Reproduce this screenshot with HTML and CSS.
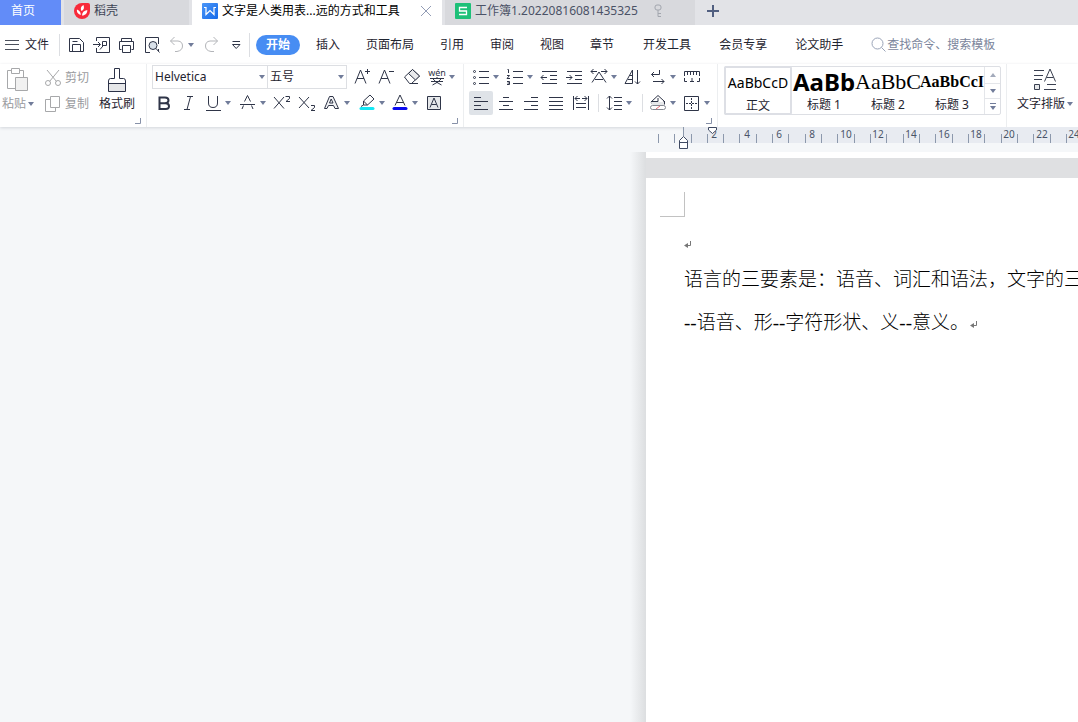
FILE: index.html
```html
<!DOCTYPE html>
<html lang="zh-CN">
<head>
<meta charset="utf-8">
<title>文字是人类用表…远的方式和工具</title>
<link rel="stylesheet" href="styles.css">
</head>
<body>
<svg class="defs" aria-hidden="true">
  <symbol id="caret" viewBox="0 0 6 4"><path d="M0 0H6L3 4Z" fill="#717c9a"/></symbol>
  <symbol id="corner" viewBox="0 0 6 6"><path d="M5.5 0V5.5H0" fill="none" stroke="#8791a8"/></symbol>
  <symbol id="mark" viewBox="0 0 8 8"><path d="M6.5 0V4.500H1" fill="none" stroke="#777"/><path d="M0 4.500L4 2V7Z" fill="#777"/></symbol>
</svg>

<nav class="tabs" aria-label="文档标签">
  <button class="tab home">首页</button>
  <button class="tab docer">
    <svg width="16" height="16" viewBox="0 0 16 16"><path d="M8 0H14Q16 0 16 2V8A8 8 0 0 1 8 16A8 8 0 0 1 0 8A8 8 0 0 1 8 0Z" fill="#f82a3a"/><path d="M7.500 8C6 5 7.500 3 9.500 2C10.500 5 10 7 7.500 8ZM6.800 12C3.500 11 2.500 8.500 3 6.500C5.800 7.500 6.800 9.500 6.800 12ZM8 12.500C8 9.500 10 7.500 13.300 7C13.500 10 11.500 12.500 8 12.500Z" fill="#fff"/></svg>
    <span>稻壳</span>
  </button>
  <div class="tab current">
    <svg width="16" height="16" viewBox="0 0 16 16"><defs><linearGradient id="wg" x2="1" y2="1"><stop stop-color="#4b96f8"/><stop offset="1" stop-color="#176be9"/></linearGradient></defs><rect width="16" height="16" rx="1" fill="url(#wg)"/><path d="M2 4.500H4V11.500L8 7.500L12 11.500V4.500H14" fill="none" stroke="#fff" stroke-width="1.200"/></svg>
    <span>文字是人类用表...远的方式和工具</span>
    <button class="close" aria-label="关闭"><svg width="12" height="12" viewBox="0 0 12 12"><path d="M1 1L11 11M11 1L1 11" stroke="#929cb5" fill="none"/></svg></button>
  </div>
  <button class="tab sheet">
    <svg width="16" height="16" viewBox="0 0 16 16"><rect width="16" height="16" rx="1" fill="#1dc078"/><path d="M12 4.500H4.500V8H11.500V11.500H4" fill="none" stroke="#fff" stroke-width="1.300"/></svg>
    <span>工作簿1.20220816081435325</span>
    <svg class="key" width="8" height="14" viewBox="0 0 8 14"><rect x="1" y="1" width="6" height="5" rx="2" fill="none" stroke="#a2a6ae"/><path d="M4 6V12.500H7M4 9.500H7" fill="none" stroke="#a2a6ae"/></svg>
  </button>
  <button class="add" aria-label="新建"><svg width="12" height="12" viewBox="0 0 12 12"><path d="M6 0V12M0 6H12" stroke="#515f80" stroke-width="2"/></svg></button>
</nav>

<header class="menu">
  <button class="file"><svg width="14" height="12" viewBox="0 0 14 12"><path d="M0 1.500H14M0 5.500H14M0 10.500H14" stroke="#4b505c"/></svg><span>文件</span></button>
  <div class="quick">
    <button aria-label="保存"><svg class="ic" viewBox="0 0 20 20"><path d="M3.500 3.500H13.500L17.500 7.500V16.500H3.500ZM6.500 16.500V9.500H14.500V16.500M6.500 6.500H11.500"/></svg></button>
    <button aria-label="输出为PDF"><svg class="ic" viewBox="0 0 20 20"><path d="M5.500 6V2.500H18.500V17.500H5.500V13M2 9.500H9M7 7L9.500 9.500L7 12M11.500 12V6.500H15.500V10.500H11.500M11.500 11.500L9 14.500"/></svg></button>
    <button aria-label="打印"><svg class="ic" viewBox="0 0 20 20"><path d="M5.500 6.500V3.500H15.500V6.500M5.500 14.500H3.500V6.500H17.500V14.500H15.500M6.500 10.500H14.500V17.500H6.500Z"/></svg></button>
    <button aria-label="打印预览"><svg class="ic" viewBox="0 0 20 20"><path d="M9 17.500H4.500V2.500H17.500V9M17.500 14V16"/><circle cx="12" cy="10.500" r="4" fill="#d9e1ea"/><path d="M15 13.500L18.500 17.500"/></svg></button>
    <button class="undo" aria-label="撤销"><svg class="ic off" viewBox="0 0 20 20"><path d="M8.500 2L4.500 6L8.500 10M4.500 6H12Q16.500 6.500 16.500 11Q16.500 15.500 11 16.500H9"/></svg><svg class="caret"><use href="#caret"/></svg></button>
    <button aria-label="恢复"><svg class="ic off" viewBox="0 0 20 20"><path d="M13.500 2L17.500 6L13.500 10M17.500 6H10Q5.500 6.500 5.500 11Q5.500 15.500 11 16.500H14"/></svg></button>
    <button aria-label="自定义"><svg class="ic" viewBox="0 0 20 20"><path d="M7.500 6.500H15M7.500 9.500H15L11.200 13.500Z"/></svg></button>
  </div>
  <div class="pages">
    <button class="on">开始</button>
    <button>插入</button><button>页面布局</button><button>引用</button><button>审阅</button><button>视图</button><button>章节</button>
  </div>
  <div class="extras"><button>开发工具</button><button>会员专享</button><button>论文助手</button>
    <label class="find"><svg width="16" height="16" viewBox="0 0 16 16"><circle cx="6.500" cy="6.500" r="5.500"/><path d="M10.500 10.500L14.500 14.500"/></svg><input type="text" placeholder="查找命令、搜索模板" aria-label="查找命令、搜索模板"></label>
  </div>
</header>

<section class="ribbon" aria-label="开始">
  <div class="group clip">
    <button class="tall faded"><svg width="24" height="26" viewBox="0 0 24 26"><path d="M5 3.500H1.500V21.500H9M14 3.500H17.500V10M5.500 1.500H13.500V6.500H5.500Z" fill="none" stroke="#a7a8aa"/><path d="M9.500 10.500H21.500V23.500H9.500Z" fill="#f1f1f1" stroke="#a7a8aa"/></svg><span>粘贴<svg class="caret"><use href="#caret"/></svg></span></button>
    <div class="pair faded">
      <button><svg width="16" height="18" viewBox="0 0 16 18"><path d="M2 1L11.500 12.500M14 1L4.500 12.500" fill="none" stroke="#a7a8aa"/><circle cx="3" cy="14" r="2.500" fill="none" stroke="#a7a8aa"/><circle cx="13" cy="14" r="2.500" fill="none" stroke="#a7a8aa"/></svg>剪切</button>
      <button><svg width="16" height="18" viewBox="0 0 16 18"><path d="M5.500 1.500H14.500V12.500H5.500ZM5.500 4.500H.5V16.500H10.500V12.500" fill="none" stroke="#a7a8aa"/></svg>复制</button>
    </div>
    <button class="tall brush"><svg width="20" height="26" viewBox="0 0 20 26"><path d="M1.500 16.500H18.500V24.500H1.500Z" fill="#e5e6e8"/><path d="M7.500 11.500V1.500H12.500V11.500H16.500Q18.500 11.500 18.500 14V24.500H1.500V14Q1.500 11.500 3.500 11.500H7.500M1.500 16.500H18.500" fill="none" stroke="#2b3147"/></svg><span>格式刷</span></button>
    <svg class="corner"><use href="#corner"/></svg>
  </div>

  <div class="group font">
    <div class="fontpick">
      <div class="combo"><select class="face" aria-label="字体"><option>Helvetica</option></select><svg class="caret"><use href="#caret"/></svg></div>
      <div class="combo size"><select aria-label="字号"><option>五号</option></select><svg class="caret"><use href="#caret"/></svg></div>
      <div class="growers">
        <button aria-label="增大字号"><svg class="ic" viewBox="0 0 20 20"><path d="M3 16.500L8.500 3L14 16.500M5 11.500H12M13 4.500H18M15.500 2V7"/></svg></button>
        <button aria-label="减小字号"><svg class="ic" viewBox="0 0 20 20"><path d="M3 16.500L8.500 3L14 16.500M5 11.500H12M13 4.500H18"/></svg></button>
        <button aria-label="清除格式"><svg class="ic" viewBox="0 0 20 20"><path d="M2.500 10L10.500 2.500L17.500 9L9.500 16.500H7.500Z"/><path d="M6.500 6.500L10.500 2.500L17.500 9L13.500 13Z" fill="#e8e9ec"/><path d="M8 16.500H16"/></svg></button>
        <button aria-label="拼音指南"><svg class="ic" viewBox="0 0 20 20"><text x="10" y="9" class="pinyin">wén</text><path d="M3 11.500H17M10 10V11.500M5.500 11.500Q8 15 14.500 18M14.500 11.500Q12 15 5.500 18M4 14.500H16"/></svg><svg class="caret"><use href="#caret"/></svg></button>
      </div>
    </div>
    <div class="cells fontrow">
      <button aria-label="加粗"><svg class="ic" viewBox="0 0 20 20"><path d="M5.500 4.500H11Q14.500 4.500 14.500 7.300T11 10.200H5.500ZM5.500 10.200H11.500Q15 10.200 15 13.200T11.500 16H5.500Z" stroke-width="2"/></svg></button>
      <button aria-label="倾斜"><svg class="ic" viewBox="0 0 20 20"><path d="M9 3.500H15M12.500 3.500L9 16.500M6 16.500H12"/></svg></button>
      <button aria-label="下划线"><svg class="ic" viewBox="0 0 20 20"><path d="M5.500 3V10Q5.500 14.500 10 14.500T14.500 10V3M3 17.500H18"/></svg><svg class="caret"><use href="#caret"/></svg></button>
      <button aria-label="删除线"><svg class="ic" viewBox="0 0 20 20"><path d="M6.500 8.500L9.500 2.500L12.500 8.500M5.500 12.500L4 16M13.500 12.500L15 16M2 11.500H17"/></svg><svg class="caret"><use href="#caret"/></svg></button>
      <button aria-label="上标"><svg class="ic" viewBox="0 0 20 20"><path d="M2 4L12 15.500M12 4L2 15.500M13.500 3.500H17.500V5.500L14 8.500H18"/></svg></button>
      <button aria-label="下标"><svg class="ic" viewBox="0 0 20 20"><path d="M2 4L12 15M12 4L2 15M14 12.500H17.500V14.500L14 17.500H18"/></svg></button>
      <button aria-label="文字效果"><svg class="ic" viewBox="0 0 20 20"><path d="M2.500 15.500L7.500 3.500H11L16.500 15.500H13L11.500 12.500H6.500L5 15.500ZM7.500 10H11L9.200 6Z" fill="#f1f2f4" fill-rule="evenodd"/></svg><svg class="caret"><use href="#caret"/></svg></button>
      <button aria-label="突出显示"><svg class="ic" viewBox="0 0 20 20"><path d="M6.500 8L13 2L17 6L10.500 12H6.500ZM6.500 8L10.500 12M6.500 12L4 13.500"/><path d="M4 15.500H16" stroke="#14e8f5" stroke-width="3" stroke-linecap="round"/></svg><svg class="caret"><use href="#caret"/></svg></button>
      <button aria-label="字体颜色"><svg class="ic" viewBox="0 0 20 20"><path d="M5 12.500L10 2L15 12.500M6.500 9.500H13.500"/><path d="M4 15.500H16" stroke="#0909f0" stroke-width="3" stroke-linecap="round"/></svg><svg class="caret"><use href="#caret"/></svg></button>
      <button aria-label="字符底纹"><svg class="ic" viewBox="0 0 20 20"><path d="M3.500 3.500H16.500V16.500H3.500Z" fill="#e6e8ea"/><path d="M6 14.500L10 5L14 14.500M7.500 11.500H12.500"/></svg></button>
    </div>
    <svg class="corner"><use href="#corner"/></svg>
  </div>

  <div class="group para">
    <div class="cells pararow">
      <button aria-label="项目符号"><svg class="ic" viewBox="0 0 20 20"><path d="M8 4.500H18M8 10.500H18M8 16.500H18"/><circle cx="3.500" cy="4.500" r="1"/><circle cx="3.500" cy="10.500" r="1"/><circle cx="3.500" cy="16.500" r="1"/></svg><svg class="caret"><use href="#caret"/></svg></button>
      <button aria-label="编号"><svg class="ic" viewBox="0 0 20 20"><path d="M8 4.500H18M8 10.500H18M8 16.500H18M2.500 2.500H3.500V6M2 8.500H4.500L2 11.500H5M2 14.500H4.500V17.500H2M2.500 16H4.500"/></svg><svg class="caret"><use href="#caret"/></svg></button>
      <button aria-label="减少缩进"><svg class="ic" viewBox="0 0 20 20"><path d="M3 4.500H18M11 8.500H18M11 12.500H18M3 16.500H18M2 10.500H8M4.500 8L2 10.500L4.500 13"/></svg></button>
      <button aria-label="增加缩进"><svg class="ic" viewBox="0 0 20 20"><path d="M3 4.500H18M11 8.500H18M11 12.500H18M3 16.500H18M2 10.500H8M5.500 8L8 10.500L5.500 13"/></svg></button>
      <button aria-label="中文版式"><svg class="ic" viewBox="0 0 20 20"><path d="M2 4.500H8M12 4.500H18M4.500 2L2 4.500L4.500 7M15.500 2L18 4.500L15.500 7M3 15.500L10 5L17 15.500M6 12.500H14"/></svg><svg class="caret"><use href="#caret"/></svg></button>
      <button aria-label="排序"><svg class="ic" viewBox="0 0 20 20"><path d="M2 16.500L9.500 3V16.500ZM7 8.500H9M5 12.500H9M14.500 3V17M12 14.500L14.500 17L17 14.500"/></svg></button>
      <button aria-label="显示段落标记"><svg class="ic" viewBox="0 0 20 20"><path d="M11.500 3V7.500H3.500M6 5L3.500 7.500L6 10M5 14.500H16M13.500 12L16 14.500L13.500 17"/></svg><svg class="caret"><use href="#caret"/></svg></button>
      <button aria-label="制表位"><svg class="ic" viewBox="0 0 20 20"><path d="M2.500 9V4.500H17.500V9M5.500 5V8M8.500 5V8M11.500 5V8M14.500 5V8M2.500 11V14.500H5M8 14.500H12M15 14.500H17.500V11M10 11V14.500"/></svg></button>
    </div>
    <div class="cells alignrow">
      <button class="pressed" aria-label="左对齐"><svg class="ic" viewBox="0 0 20 20"><path d="M3 4.500H10M3 8.500H17M3 12.500H10M3 16.500H17"/></svg></button>
      <button aria-label="居中"><svg class="ic" viewBox="0 0 20 20"><path d="M7 4.500H13M3 8.500H17M7 12.500H13M3 16.500H17"/></svg></button>
      <button aria-label="右对齐"><svg class="ic" viewBox="0 0 20 20"><path d="M10 4.500H17M3 8.500H17M10 12.500H17M3 16.500H17"/></svg></button>
      <button aria-label="两端对齐"><svg class="ic" viewBox="0 0 20 20"><path d="M3 4.500H17M3 8.500H17M3 12.500H17M3 16.500H17"/></svg></button>
      <button aria-label="分散对齐"><svg class="ic" viewBox="0 0 20 20"><path d="M2.500 3V17M17.500 3V17M4 5.500H9M11 5.500H16M6.500 3L4 5.500L6.500 8M13.500 3L16 5.500L13.500 8M5 10.500H15M5 14.500H15"/></svg></button>
      <i class="rule"></i>
      <button aria-label="行距"><svg class="ic" viewBox="0 0 20 20"><path d="M5.500 3V17M3 5.500L5.500 3L8 5.500M3 14.500L5.500 17L8 14.500M10 4.500H18M10 8.500H18M10 12.500H18M10 16.500H18"/></svg><svg class="caret"><use href="#caret"/></svg></button>
      <i class="rule"></i>
      <button aria-label="底纹颜色"><svg class="ic" viewBox="0 0 20 20"><path d="M5 12L3 9L10 2.500L16 8V12Z"/><path d="M3 9H16V12H4Z" fill="#e6e8ea" stroke="none"/><path d="M3 8.500H10V5M16.500 8V11"/><rect x="2.500" y="12.500" width="15" height="4" rx="2" fill="#fff" stroke="#858992"/><path d="M8 16L12 13" stroke="#e86a74"/></svg><svg class="caret"><use href="#caret"/></svg></button>
      <button aria-label="边框"><svg class="ic" viewBox="0 0 20 20"><path d="M2.500 3.500H16.500V17.500H2.500Z"/><path d="M9.500 5V16M4 10.500H15" stroke-dasharray="2 1"/></svg><svg class="caret"><use href="#caret"/></svg></button>
    </div>
    <svg class="corner"><use href="#corner"/></svg>
  </div>

  <div class="group styles">
    <div class="gallery">
      <button class="style chosen"><b class="s0">AaBbCcD</b><span>正文</span></button>
      <button class="style"><b class="s1">AaBb</b><span>标题 1</span></button>
      <button class="style"><b class="s2">AaBbC</b><span>标题 2</span></button>
      <button class="style"><b class="s3">AaBbCcI</b><span>标题 3</span></button>
      <div class="scroll">
        <button aria-label="上一行"><svg width="6" height="4" viewBox="0 0 6 4"><path d="M0 4H6L3 0Z" fill="#a3aabb"/></svg></button>
        <button aria-label="下一行"><svg class="caret"><use href="#caret"/></svg></button>
        <button aria-label="更多样式"><svg width="6" height="8" viewBox="0 0 6 8"><path d="M0 .5H6" stroke="#717c9a"/><path d="M0 3H6L3 7Z" fill="#717c9a"/></svg></button>
      </div>
    </div>
  </div>

  <div class="group layout">
    <button class="tall"><svg width="24" height="26" viewBox="0 0 24 26"><path d="M1 3.500H11M1 8.500H10M1 12.500H9M11 22.500H23M14 17.500H23M11.500 14.500L17 2L22.500 14.500M13.500 10.500H20.500" fill="none" stroke="#3a4050"/><path d="M1.500 17.500H6.500V22.500H1.500Z" fill="#e6e8ea" stroke="#3a4050"/></svg><span>文字排版<svg class="caret"><use href="#caret"/></svg></span></button>
  </div>
</section>

<main class="work">
  <div class="ruler">
    <svg width="432" height="25" viewBox="0 0 432 25" role="img" aria-label="标尺">
      <rect x="37" width="395" height="16" fill="#e8ebf1"/>
      <path d="M12.500 7V16M28.500 7V16M45.500 7V16M61.500 7V16M77.500 7V16M93.500 7V16M110.500 7V16M126.500 7V16M142.500 7V16M159.500 7V16M175.500 7V16M191.500 7V16M208.500 7V16M224.500 7V16M240.500 7V16M257.500 7V16M273.500 7V16M289.500 7V16M306.500 7V16M322.500 7V16M338.500 7V16M355.500 7V16M371.500 7V16M387.500 7V16M404.500 7V16M420.500 7V16" stroke="#8c98ac"/>
      <g class="nums"><text x="68" y="11">2</text><text x="101" y="11">4</text><text x="133" y="11">6</text><text x="166" y="11">8</text><text x="200" y="11">10</text><text x="232" y="11">12</text><text x="265" y="11">14</text><text x="298" y="11">16</text><text x="330" y="11">18</text><text x="363" y="11">20</text><text x="396" y="11">22</text><text x="428" y="11">24</text></g>
      <path d="M37.500 0V9" stroke="#8c98ac"/>
      <path d="M33.500 21.500V13.500L37.500 9.500L41.500 13.500V21.500ZM33.500 15.500H41.500M62.500 .5H70.500V3L66.500 6.500L62.500 3Z" fill="#fff" stroke="#3f4a63"/>
    </svg>
  </div>
  <div class="desk">
    <div class="gutter"></div>
    <div class="sheets">
      <div class="tail"></div>
      <article class="page">
        <div class="crop"></div>
        <div class="copy">
          <p class="blank"><svg class="mark"><use href="#mark"/></svg></p>
          <p>语言的三要素是：语音、词汇和语法，文字的三</p>
          <p><b>--</b>语音、形<b>--</b>字符形状、义<b>--</b>意义。<svg class="mark"><use href="#mark"/></svg></p>
        </div>
      </article>
    </div>
  </div>
</main>
</body>
</html>
```

FILE: styles.css
```css
* { box-sizing: border-box; }
html, body { height: 100%; }
body {
  margin: 0;
  display: flex;
  flex-direction: column;
  overflow: hidden;
  background: #f5f7f9;
  color: #1f2430;
  font: 12px/16px "Noto Sans", "Noto Sans CJK SC", sans-serif;
}
button, select, input { font: inherit; color: inherit; background: none; border: 0; padding: 0; margin: 0; }
button { display: flex; align-items: center; white-space: nowrap; }
svg { flex: none; display: block; }
.defs { display: none; }
.ic { width: 20px; height: 20px; fill: none; stroke: #2f3548; }
.ic.off { stroke: #b3b5b9; }
.caret { width: 6px; height: 4px; margin-left: 2px; }
.pinyin { font: 9px "Noto Sans", sans-serif; text-anchor: middle; fill: #2f3548; stroke: none; }

/* document tabs */
.tabs { display: flex; flex: none; gap: 3px; height: 25px; background: #e2e3e7; }
.tab { display: flex; align-items: center; gap: 4px; padding: 0 10px 4px; background: #d8d9dd; color: #4b5266; white-space: nowrap; }
.home { width: 61px; padding-left: 11px; background: #628cf8; color: #fff; }
.docer { width: 125px; color: #3d4454; }
.current { width: 250px; background: #fff; color: #000; }
.current .close { margin-left: auto; }
.sheet { width: 250px; }
.key { margin-left: 12px; }
.add { padding: 0 9px 4px; }

/* menu row */
.menu { display: flex; flex: none; align-items: center; height: 39px; background: #fff; }
.file { gap: 6px; width: 60px; height: 22px; padding-left: 5px; border-right: 1px solid #dcdee2; }
.quick { display: flex; gap: 5px; width: 190px; height: 24px; align-items: center; padding-left: 6px; border-right: 1px solid #dcdee2; }
.quick .undo { width: 29px; }
.pages { display: flex; align-items: center; gap: 26px; padding-left: 6px; }
.pages .on { height: 20px; padding: 0 10px; margin-right: -10px; border-radius: 10px; background: #478df3; color: #fff; font-weight: bold; }
.extras { display: flex; align-items: center; gap: 28px; padding-left: 29px; }
.find { display: flex; align-items: center; color: #7b859b; }
.find svg { fill: none; stroke: #9aa4b8; }
.find input { width: 120px; }
.find input::placeholder { color: #7b859b; opacity: 1; }

/* ribbon */
.ribbon { display: flex; flex: none; height: 63px; background: #fff; box-shadow: 0 1px 3px #d3d6db; }
.group { position: relative; flex: none; border-right: 1px solid #eceef0; }
.corner { position: absolute; right: 5px; bottom: 3px; width: 6px; height: 6px; }
.tall { flex-direction: column; gap: 3px; padding-top: 3px; }
.tall span { display: flex; align-items: center; }
.faded { color: #9a9b9e; }
.clip { display: flex; width: 147px; padding-left: 2px; }
.pair { display: flex; flex-direction: column; width: 54px; margin-left: 11px; padding-top: 1px; }
.pair button { height: 26px; gap: 4px; }
.clip .tall { align-self: flex-start; }
.font { width: 317px; padding-left: 5px; }
.para { width: 254px; padding-left: 7px; }
.fontpick { display: flex; align-items: center; height: 26px; }
.combo { display: flex; align-items: center; width: 116px; height: 24px; padding: 0 2px; border: 1px solid #dddfe3; }
.combo select { flex: 1; min-width: 0; appearance: none; }
.combo.size { width: 80px; margin-left: -1px; }
.growers { display: grid; grid-template-columns: 24px 26px 25px 28px; padding-left: 5px; }
.cells { display: grid; height: 26px; align-items: center; }
.fontrow { grid-template-columns: 24px 25px 35px 34px 25px 25px 35px 33px 34px 20px; padding-left: 2px; }
.pararow { grid-template-columns: 34px 34px 25px 25px 34px 25px 34px 20px; }
.alignrow { grid-template-columns: 25px 25px 25px 25px 27px 6px 38px 6px 34px 30px; }
.pressed { width: 24px; height: 24px; padding: 2px; margin-left: -2px; background: #dfe3e8; border-radius: 2px; }
.rule { width: 1px; height: 18px; background: #dcdee2; }

.styles { width: 289px; padding: 2px 0 0 6px; }
.gallery { display: flex; width: 277px; height: 49px; border: 1px solid #dddfe4; border-radius: 2px; }
.style { flex: 1; min-width: 0; flex-direction: column; }
.style b { height: 30px; font-weight: normal; color: #000; }
.chosen { border: 2px solid #dddfe5; border-radius: 2px; margin: -1px 0 -1px -1px; }
.style .s0 { font: 14px/30px "Noto Sans", sans-serif; }
.style .s1 { font: bold 24px/30px "Noto Sans", sans-serif; }
.style .s2 { font: 22px/30px "Liberation Serif", serif; }
.style .s3 { font: bold 16px/30px "Liberation Serif", serif; }
.scroll { display: grid; grid-template-rows: 1fr 1fr 1fr; width: 16px; border-left: 1px solid #e4e6ea; }
.scroll button { justify-content: center; }
.scroll button + button { border-top: 1px solid #e4e6ea; }
.scroll .caret { margin: 0; }
.layout { border: 0; padding-left: 10px; }

/* workspace */
.work { flex: 1; min-height: 0; display: flex; flex-direction: column; }
.ruler { display: flex; flex: none; height: 25px; padding-left: 646px; overflow: hidden; }
.nums { font: 10px "Noto Sans", sans-serif; text-anchor: middle; fill: #4a5468; }
.desk { flex: 1; min-height: 0; display: grid; grid-template-columns: 646px 1fr; }
.gutter { background: linear-gradient(to left, #dcdee0, #f5f7f9) right / 16px 100% no-repeat; }
.sheets { display: flex; flex-direction: column; min-width: 0; overflow: hidden; background: #dfe0e2; }
.tail { height: 6px; margin-bottom: 20px; background: #fff; }
.page { flex: 1; padding: 14px 0 0 14px; background: #fff; }
.crop { width: 25px; height: 25px; border: solid #c2c2c2; border-width: 0 1px 1px 0; }
.copy { padding-left: 24px; color: #000; font: 300 19px/43px "Liberation Serif", "Noto Sans CJK SC", serif; }
.copy p { margin: 0; white-space: nowrap; }
.copy .blank { display: flex; align-items: center; height: 41px; padding-top: 14px; }
.copy .blank .mark { margin-left: 0; }
.mark { display: inline-block; width: 8px; height: 8px; margin-left: 1px; }
```
